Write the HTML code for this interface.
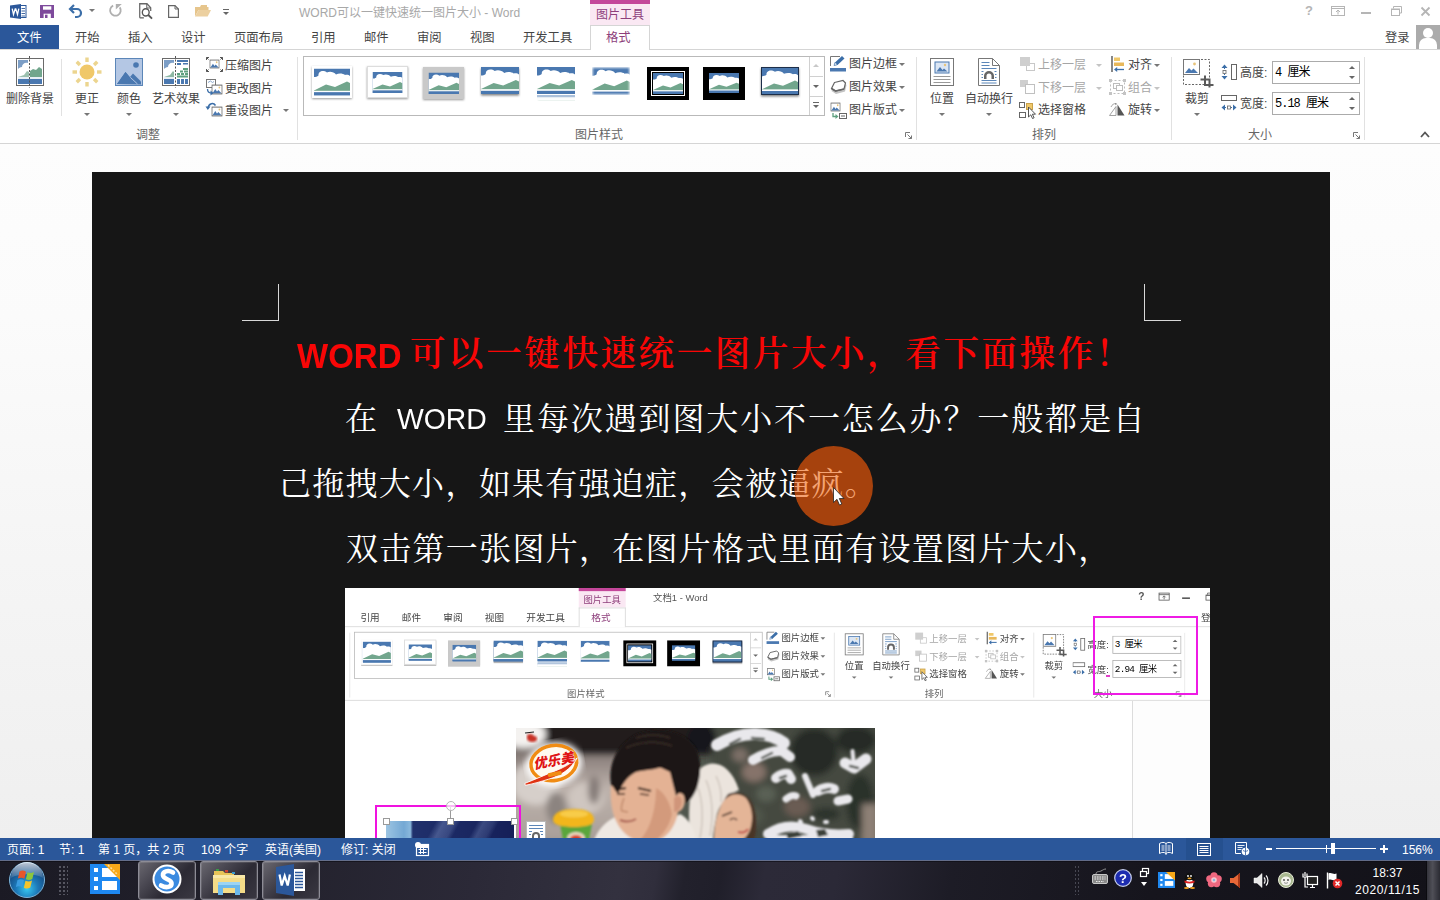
<!DOCTYPE html>
<html lang="zh-CN"><head><meta charset="utf-8"><title>WORD</title>
<style>
html,body{margin:0;padding:0}
body{width:1440px;height:900px;overflow:hidden;position:relative;background:#fff;font-family:"Liberation Sans","Noto Sans CJK SC",sans-serif;font-size:12px;color:#444;line-height:1}
.a{position:absolute}
.t{position:absolute;white-space:nowrap;line-height:16px;height:16px}
.tab{position:absolute;top:30px;font-size:12.300px;line-height:16px;color:#444;white-space:nowrap}
.lbl{position:absolute;font-size:12px;line-height:16px;color:#444;white-space:nowrap}
.dis{color:#a6a6a6}
.grp{position:absolute;top:127px;font-size:12px;line-height:16px;color:#666;white-space:nowrap}
.sep{position:absolute;top:57px;width:1px;height:83px;background:#e1e1e1}
.arr{position:absolute;width:0;height:0;border-left:3px solid transparent;border-right:3px solid transparent;border-top:3px solid #777}
svg{position:absolute;overflow:visible}
.st{position:absolute;top:842px;font-size:12px;line-height:16px;color:#fff;white-space:nowrap}
.tb{position:absolute;top:861px;width:56px;height:37px;border:1px solid #8d8c96;border-radius:3px;background:linear-gradient(135deg,#6a6870 0,#4a4852 30%,#2c2a34 60%,#3a3842 100%);box-shadow:inset 0 0 0 1px rgba(255,255,255,.12)}
.dt{position:absolute;white-space:nowrap;font-family:"Liberation Serif","Noto Serif CJK SC",serif;font-size:33.280px;line-height:50px;height:50px;color:#fff}
</style></head><body>
<svg width="0" height="0" style="position:absolute;left:-10px;top:-10px">
<defs>
<symbol id="pic" viewBox="0 0 36 27" preserveAspectRatio="none">
<rect width="36" height="27" fill="#4a78b0"/>
<path d="M0 8.500C2 8.500 3 8 4.500 7C4 3 9 1 13 4C15 2.500 20 3 22 6C25 4.500 29 5 31 6.500C33 6 35 6.500 36 7.500V23H0z" fill="#fff"/>
<path d="M0 22l12-6 9 2.500 12-5.500 3 1.500v8H0z" fill="#72a68d"/>
<rect y="22.300" width="36" height="1.600" fill="#fff"/>
<rect y="23.900" width="36" height="3.100" fill="#4a78b0"/>
</symbol>
<symbol id="mtn" viewBox="0 0 16 12" preserveAspectRatio="none">
<rect x="0.500" y="0.500" width="15" height="11" fill="#fff" stroke="#5a5a5a" stroke-width="1.500"/>
<path d="M1.500 10.500l4-5 2.500 3 2-2 4.500 4z" fill="#4a78b0"/><circle cx="11.500" cy="3.600" r="1.300" fill="#e8c47a"/>
</symbol>
<filter id="sh" x="-20%" y="-20%" width="140%" height="150%"><feDropShadow dx="0" dy="1" stdDeviation="1" flood-color="#000" flood-opacity="0.400"/></filter>
<filter id="sh2" x="-20%" y="-20%" width="140%" height="150%"><feDropShadow dx="0" dy="1.500" stdDeviation="1" flood-color="#000" flood-opacity="0.500"/></filter>
<filter id="soft" x="-10%" y="-10%" width="120%" height="120%"><feGaussianBlur stdDeviation="1"/></filter>
</defs>
</svg>

<!-- title bar -->
<div class="a" style="left:0;top:0;width:1440px;height:25px;background:#fff"></div>
<!-- word icon -->
<svg style="left:10px;top:4px" width="17" height="15" viewBox="0 0 17 15">
<rect x="8" y="1.5" width="8" height="12" fill="#fff" stroke="#2b579a" stroke-width="1"/>
<path d="M11.500 4.500h3.500M11.500 7h3.500M11.500 9.500h3.500M11.500 12h3.500" stroke="#2b579a" stroke-width="0.900"/>
<path d="M0 1.6L11 0v15L0 13.4z" fill="#2b579a"/>
<path d="M2.2 4.6l1.3 5.8L5.2 5l.6 0 1.7 5.4L8.8 4.6" fill="none" stroke="#fff" stroke-width="1.3"/>
</svg>
<!-- save -->
<svg style="left:40px;top:5px" width="14" height="13" viewBox="0 0 14 13">
<path d="M0 0h14v13H0z" fill="#7e4a9c"/><rect x="3" y="1.300" width="8.300" height="3.400" fill="#fff"/><rect x="3.600" y="8.700" width="7.200" height="4.300" fill="#fff"/><rect x="5" y="9.700" width="2.500" height="3.300" fill="#7e4a9c"/>
</svg>
<!-- undo -->
<svg style="left:69px;top:4px" width="14" height="14" viewBox="0 0 14 14">
<path d="M5 1L1 5l4 4" fill="none" stroke="#3b6ea8" stroke-width="2.2"/><path d="M1.5 5h6.5a4 4 0 0 1 0 8H6" fill="none" stroke="#3b6ea8" stroke-width="2.2"/>
</svg>
<div class="arr" style="left:89px;top:9px;border-top-color:#777"></div>
<!-- redo -->
<svg style="left:109px;top:3px" width="14" height="15" viewBox="0 0 14 15">
<path d="M4.160 2.600A5.300 5.300 0 1 0 10.740 4.360" fill="none" stroke="#b0b0b0" stroke-width="1.800"/><path d="M6.800 1h6l-6 5.500z" fill="#b0b0b0"/>
</svg>
<!-- print preview -->
<svg style="left:139px;top:2.800px" width="14.500" height="16.500" viewBox="0 0 14 15" preserveAspectRatio="none">
<path d="M0.7 13.5V0.7h7l3.6 3.6v3" fill="none" stroke="#666" stroke-width="1.2"/><path d="M7.5 0.7v3.8h3.8" fill="none" stroke="#666" stroke-width="1"/>
<circle cx="6.5" cy="8.5" r="3.3" fill="#fff" stroke="#555" stroke-width="1.3"/><path d="M9 11l3.6 3.2" stroke="#555" stroke-width="1.8"/><path d="M0.7 13.5h4" stroke="#666" stroke-width="1.2"/>
</svg>
<!-- new -->
<svg style="left:168px;top:5px" width="11" height="13" viewBox="0 0 11 13">
<path d="M0.6 0.6h6.4l3.4 3.4v8.4H0.6z" fill="#fff" stroke="#666" stroke-width="1.2"/><path d="M7 0.6v3.4h3.4" fill="none" stroke="#666" stroke-width="1"/>
</svg>
<!-- folder -->
<svg style="left:195px;top:5px" width="16" height="12" viewBox="0 0 16 12">
<path d="M0 11.5V2h5l1-2h6v2h1.5v3H3.5z" fill="#e6c58c"/><path d="M0 11.5l3.5-6.5H16l-3.3 6.5z" fill="#ecd0a0"/>
</svg>
<div class="a" style="left:223px;top:9px;width:6px;height:1px;background:#666"></div>
<div class="arr" style="left:223px;top:12px;border-top-color:#666"></div>
<div class="t" style="left:299px;top:5px;font-size:12px;color:#a8a8a8">WORD可以一键快速统一图片大小 - Word</div>
<!-- picture tools context -->
<div class="a" style="left:590px;top:0;width:60px;height:25px;background:#fae8f3"></div>
<div class="a" style="left:590px;top:0;width:60px;height:4px;background:#c4479a"></div>
<div class="t" style="left:596px;top:6.700px;font-size:12px;color:#8e3f7c">图片工具</div>
<!-- window buttons -->
<div class="t" style="left:1305px;top:3px;font-size:13px;font-weight:bold;color:#b5b5b5">?</div>
<svg style="left:1331px;top:6px" width="14" height="10" viewBox="0 0 14 10"><rect x="0.5" y="0.5" width="13" height="9" fill="none" stroke="#b5b5b5"/><path d="M0.5 2.5h13" stroke="#b5b5b5"/><path d="M7 8.5V4.5M5 6l2-2 2 2" fill="none" stroke="#b5b5b5"/></svg>
<div class="a" style="left:1361px;top:12px;width:10px;height:2px;background:#b5b5b5"></div>
<svg style="left:1391px;top:6px" width="11" height="10" viewBox="0 0 11 10"><path d="M2.5 2.5V0.5h8v6.5h-2" fill="none" stroke="#b5b5b5"/><rect x="0.5" y="3" width="8" height="6.5" fill="none" stroke="#b5b5b5"/><path d="M0.5 3.5h8" stroke="#b5b5b5"/></svg>
<svg style="left:1421px;top:7px" width="9" height="9" viewBox="0 0 9 9"><path d="M0.5 0.5l8 8M8.5 0.5l-8 8" stroke="#b5b5b5" stroke-width="1.8"/></svg>

<!-- tabs -->
<div class="a" style="left:0;top:25px;width:59px;height:24px;background:#2b579a"></div>
<div class="tab" style="left:17px;color:#fff">文件</div>
<div class="tab" style="left:75px">开始</div>
<div class="tab" style="left:128px">插入</div>
<div class="tab" style="left:181px">设计</div>
<div class="tab" style="left:234px">页面布局</div>
<div class="tab" style="left:311px">引用</div>
<div class="tab" style="left:364px">邮件</div>
<div class="tab" style="left:417px">审阅</div>
<div class="tab" style="left:470px">视图</div>
<div class="tab" style="left:523px">开发工具</div>
<div class="a" style="left:0;top:49px;width:1440px;height:1px;background:#d5d5d5"></div>
<div class="a" style="left:590px;top:25px;width:58px;height:24px;background:#fff;border:1px solid #d5d5d5;border-bottom:none"></div>
<div class="tab" style="left:606px;color:#8e3f7c">格式</div>
<div class="tab" style="left:1385px">登录</div>
<div class="a" style="left:1416px;top:25px;width:24px;height:24px;background:#ababab;overflow:hidden">
<div class="a" style="left:7px;top:3px;width:10px;height:10px;border-radius:50%;background:#fff"></div>
<div class="a" style="left:3px;top:13px;width:18px;height:16px;border-radius:7px 7px 0 0;background:#fff"></div>
</div>

<!-- ribbon -->
<div class="a" style="left:0;top:143px;width:1440px;height:1px;background:#d5d5d5"></div>
<!-- group 1: adjust -->
<svg style="left:16px;top:56px" width="28" height="32" viewBox="0 0 28 32">
<rect x="0.500" y="2.500" width="27" height="27" fill="#fff" stroke="#6a6a6a"/>
<path d="M2 4h10v3c-3-1-6 1-6 4c-2 0-3 1-4 2z" fill="#5b86b8" opacity="0.800"/>
<path d="M2 21l6-2 3-4 2 1v5z" fill="#72a68d" opacity="0.700"/>
<path d="M14 21v-6l3-2 3 1 3-3 3 2v8z" fill="#72a68d"/>
<rect x="2" y="21.300" width="24" height="1.400" fill="#dfe9f3"/>
<rect x="2" y="23" width="24" height="5" fill="#4a78b0"/>
<path d="M13.500 0v32" stroke="#555" stroke-width="1" stroke-dasharray="2 1.500"/>
</svg>
<div class="lbl" style="left:6px;top:91px">删除背景</div>
<div class="a" style="left:61px;top:59px;width:1px;height:57px;background:#e1e1e1"></div>
<!-- sun -->
<svg style="left:72px;top:57px" width="30" height="30" viewBox="0 0 30 30">
<g fill="#ecd58f"><rect x="13.300" y="0.500" width="3.400" height="4.500"/><rect x="13.300" y="25" width="3.400" height="4.500"/><rect x="0.500" y="13.300" width="4.500" height="3.400"/><rect x="25" y="13.300" width="4.500" height="3.400"/>
<g transform="rotate(45 15 15)"><rect x="13.300" y="0.500" width="3.400" height="4.500"/><rect x="13.300" y="25" width="3.400" height="4.500"/><rect x="0.500" y="13.300" width="4.500" height="3.400"/><rect x="25" y="13.300" width="4.500" height="3.400"/></g></g>
<circle cx="15" cy="15" r="7.500" fill="#f0c869"/>
</svg>
<div class="lbl" style="left:75px;top:91px">更正</div>
<div class="arr" style="left:84px;top:113px"></div>
<!-- color -->
<svg style="left:115px;top:58px" width="28" height="28" viewBox="0 0 28 28">
<rect x="0.500" y="0.500" width="27" height="27" fill="#b4c7e4" stroke="#5b86b8"/>
<path d="M2 26l8.500-12 7 8.500-1.500 1.500 2-5 8.500 7.500z" fill="#4a78b0"/><path d="M2 26l8.500-12 10 12z" fill="#4a78b0"/><path d="M15 19l3-3.500 8 8v2.500h-4z" fill="#4a78b0"/>
<path d="M15.500 19.500l7 6.500" stroke="#b4c7e4" stroke-width="1"/>
<circle cx="21" cy="7" r="2.800" fill="#4a78b0"/>
</svg>
<div class="lbl" style="left:117px;top:91px">颜色</div>
<div class="arr" style="left:126px;top:113px"></div>
<!-- artistic -->
<svg style="left:162px;top:56px" width="28" height="32" viewBox="0 0 28 32">
<rect x="0.500" y="2.500" width="27" height="27" fill="#fff" stroke="#6a6a6a"/>
<path d="M2 4h10v3c-3-1-6 1-6 4c-2 0-3 1-4 2z" fill="#5b86b8" opacity="0.800"/>
<path d="M2 21l6-2 3-4 1 1v5z" fill="#72a68d" opacity="0.800"/>
<rect x="2" y="21.300" width="10" height="1.400" fill="#dfe9f3"/>
<rect x="2" y="23" width="10" height="5" fill="#4a78b0"/>
<g fill="#4a78b0"><rect x="15" y="4" width="11" height="2"/><rect x="15" y="7" width="4" height="2"/><rect x="21" y="7" width="5" height="1.500"/><rect x="15" y="23" width="3" height="5"/><rect x="19" y="23" width="3" height="5"/><rect x="23" y="23" width="3" height="5"/></g>
<g fill="#5fa07f"><rect x="21" y="12" width="5" height="2"/><rect x="18" y="14.500" width="3" height="2"/><rect x="22" y="14.500" width="4" height="2"/><rect x="15" y="17" width="3" height="2"/><rect x="19" y="17" width="3" height="2"/><rect x="23" y="17" width="3" height="2"/><rect x="15" y="19.500" width="11" height="2"/></g>
<path d="M13.500 0v32" stroke="#555" stroke-width="1" stroke-dasharray="2 1.500"/>
</svg>
<div class="lbl" style="left:152px;top:91px">艺术效果</div>
<div class="arr" style="left:173px;top:113px"></div>
<!-- small buttons -->
<svg style="left:206px;top:57px" width="17" height="15" viewBox="0 0 17 15">
<use href="#mtn" x="3.500" y="2.500" width="10" height="9"/>
<path d="M0.500 3V0.500H3M14 0.500h2.500V3M16.500 12v2.500H14M3 14.500H0.500V12" fill="none" stroke="#555" stroke-width="1"/>
<path d="M0.500 0.500l2 2M16.500 0.500l-2 2M16.500 14.500l-2-2M0.500 14.500l2-2" stroke="#555" stroke-width="1"/>
</svg>
<div class="lbl" style="left:225px;top:58px">压缩图片</div>
<svg style="left:206px;top:79px" width="17" height="16" viewBox="0 0 17 16">
<rect x="0.500" y="0.500" width="9" height="8" fill="#fff" stroke="#777"/>
<use href="#mtn" x="5.500" y="5.500" width="11" height="10"/>
<path d="M2 3.500l2.500-1.500 2 1.500 1.500-1" fill="none" stroke="#8aa8cc" stroke-width="1"/><path d="M1.500 10c0 3 1 4 4 4" fill="none" stroke="#3b6ea8" stroke-width="1.300"/><path d="M4.500 11.500l3 2.500-3 2.500z" fill="#3b6ea8"/>
</svg>
<div class="lbl" style="left:225px;top:81px">更改图片</div>
<svg style="left:206px;top:102px" width="17" height="16" viewBox="0 0 17 16">
<use href="#mtn" x="5.500" y="4.500" width="11" height="10"/>
<path d="M9.500 3.500C7.500 0.500 3 1 2 6" fill="none" stroke="#3b6ea8" stroke-width="1.500"/><path d="M-0.500 4.500h5l-2.700 3.500z" fill="#3b6ea8"/>
</svg>
<div class="lbl" style="left:225px;top:103px">重设图片</div>
<div class="arr" style="left:283px;top:109px"></div>
<div class="grp" style="left:136px">调整</div>
<div class="sep" style="left:297px"></div>
<!-- gallery -->
<div class="a" style="left:303px;top:56px;width:520px;height:58px;border:1px solid #b9b9b9;background:#fff"></div>
<div class="a" style="left:809px;top:57px;width:1px;height:58px;background:#d0d0d0"></div>
<div class="a" style="left:809px;top:76px;width:14px;height:1px;background:#d0d0d0"></div>
<div class="a" style="left:809px;top:96px;width:14px;height:1px;background:#d0d0d0"></div>
<div class="arr" style="left:813px;top:64px;border-top:none;border-bottom:3px solid #c8c8c8"></div>
<div class="arr" style="left:813px;top:85px;border-top-color:#666"></div>
<div class="a" style="left:813px;top:102px;width:6px;height:1px;background:#666"></div>
<div class="arr" style="left:813px;top:105px;border-top-color:#666"></div>
<!-- thumbs -->
<svg style="left:312px;top:66px" width="40" height="32"><rect width="40" height="32" fill="#fff" filter="url(#sh)"/><use href="#pic" x="2" y="2.500" width="36" height="27"/></svg>
<svg style="left:367px;top:66px" width="41" height="32"><rect x="0.500" y="0.500" width="40" height="31" fill="#fff" stroke="#ddd" filter="url(#sh)"/><use href="#pic" x="5.500" y="6" width="30" height="21"/></svg>
<svg style="left:423px;top:67px" width="41" height="32"><rect width="41" height="32" fill="#c9c9c9" filter="url(#sh)"/><use href="#pic" x="5.500" y="5.500" width="30.500" height="21.500"/></svg>
<svg style="left:481px;top:67px" width="38" height="29"><use href="#pic" width="38" height="27" filter="url(#sh2)"/></svg>
<svg style="left:537px;top:67px;overflow:hidden" width="38" height="34"><use href="#pic" width="38" height="27"/><use href="#pic" width="38" height="27" transform="matrix(1 0 0 -1 0 55)" opacity="0.450"/><rect y="30" width="38" height="8" fill="#fff" opacity="0.700"/></svg>
<svg style="left:592px;top:67px;overflow:hidden" width="38" height="29"><use href="#pic" x="0" y="0" width="38" height="28"/><rect x="-1" y="-1" width="40" height="30" fill="none" stroke="#fff" stroke-width="3.500" filter="url(#soft)"/></svg>
<svg style="left:647px;top:67px" width="42" height="33"><rect width="42" height="33" fill="#000"/><use href="#pic" x="6" y="6" width="30" height="21"/><rect x="4.500" y="4.500" width="33" height="24" fill="none" stroke="#fff" stroke-width="1"/></svg>
<svg style="left:703px;top:67px" width="42" height="33"><rect width="42" height="33" fill="#000"/><use href="#pic" x="6" y="6" width="30" height="20"/></svg>
<svg style="left:761px;top:67px" width="38" height="29"><rect width="38" height="28" fill="#1f2f4a" filter="url(#sh2)"/><use href="#pic" x="1" y="1" width="36" height="26"/></svg>
<!-- pic border/effects/layout -->
<svg style="left:830px;top:56px" width="17" height="17" viewBox="0 0 17 17">
<path d="M0.500 10V0.500H10" fill="none" stroke="#777"/><path d="M4 9.500l1-3 7-6.500 2.500 2.500-7 6.500z" fill="#3b6ea8"/><path d="M4 9.500l1-3 2.500 2z" fill="#fff" stroke="#3b6ea8" stroke-width="0.600"/>
<rect x="0" y="12" width="16" height="3.500" fill="#4a78b0"/>
</svg>
<div class="lbl" style="left:849px;top:56px">图片边框</div><div class="arr" style="left:899px;top:63px"></div>
<svg style="left:830px;top:80px" width="17" height="15" viewBox="0 0 17 15">
<path d="M4 3l9-2.500 3 3-1.500 6.500-9 2.500-4.500-3z" fill="#888" opacity="0.500" transform="translate(0.500 1.500)"/>
<path d="M4.500 2.500l8.500-2 2.500 2.500-1.500 6-8.500 2-4-2.500z" fill="#fff" stroke="#666" stroke-width="1.200"/><path d="M1.500 8.500l4 2.500 8.500-2" fill="none" stroke="#666" stroke-width="1.500"/>
</svg>
<div class="lbl" style="left:849px;top:79px">图片效果</div><div class="arr" style="left:899px;top:86px"></div>
<svg style="left:830px;top:102px" width="17" height="17" viewBox="0 0 17 17">
<use href="#mtn" x="0.500" y="0.500" width="10" height="9"/>
<path d="M3 11v3.500h3.500" fill="none" stroke="#5fa07f" stroke-width="1.300"/><path d="M5.500 12l3 2.500-3 2.500z" fill="#5fa07f"/>
<rect x="9.500" y="11.500" width="7" height="5" fill="#fff" stroke="#666"/><path d="M11 14h4" stroke="#666"/>
</svg>
<div class="lbl" style="left:849px;top:102px">图片版式</div><div class="arr" style="left:899px;top:109px"></div>
<div class="grp" style="left:575px">图片样式</div>
<svg style="left:905px;top:132px" width="7" height="7" viewBox="0 0 7 7"><path d="M0.500 5V0.500H5" fill="none" stroke="#777"/><path d="M2.500 2.500l4 4M6.500 3.500v3h-3" fill="none" stroke="#777"/></svg>
<div class="sep" style="left:916px"></div>
<!-- arrange group -->
<svg style="left:930px;top:58px" width="24" height="28" viewBox="0 0 24 28">
<rect x="0.500" y="0.500" width="23" height="27" fill="#fff" stroke="#777"/>
<rect x="5" y="4" width="14" height="11" fill="#dbe6f4" stroke="#4a78b0"/>
<path d="M6.500 13.500l3.500-4.500 2.500 3 1.500-1.500 3.500 3z" fill="#4a78b0"/><circle cx="15" cy="7" r="1.200" fill="#e8c47a"/>
<path d="M3.500 18.500h17M3.500 21.500h17M3.500 24.500h17" stroke="#999"/>
</svg>
<div class="lbl" style="left:930px;top:91px">位置</div>
<div class="arr" style="left:939px;top:113px"></div>
<svg style="left:978px;top:58px" width="22" height="28" viewBox="0 0 22 28">
<path d="M0.500 0.500h14l7 7v20H0.500z" fill="#fff" stroke="#777"/><path d="M14.500 0.500v7h7" fill="none" stroke="#777"/>
<path d="M3.500 4.500h8M3.500 7.500h8M3.500 10.500h15M3.500 22.500h15M3.500 25h15M3.500 13.500h2M16.500 13.500h2M3.500 16.500h1.500M17 16.500h1.500M3.500 19.500h1.500M17 19.500h1.500" stroke="#5b86b8"/>
<path d="M6 21v-3a5 5 0 0 1 10 0v3h-2.500v-3a2.500 2.500 0 0 0-5 0v3z" fill="#666"/>
</svg>
<div class="lbl" style="left:965px;top:91px">自动换行</div>
<div class="arr" style="left:986px;top:113px"></div>
<!-- bring forward / send backward / selection pane -->
<svg style="left:1020px;top:57px" width="16" height="15" viewBox="0 0 16 15"><rect x="6.500" y="6.500" width="8" height="7" fill="#fff" stroke="#c8c8c8"/><rect x="0" y="0" width="10" height="9" fill="#cfcfcf"/></svg>
<div class="lbl dis" style="left:1038px;top:57px">上移一层</div><div class="arr" style="left:1096px;top:64px;border-top-color:#c4c4c4"></div>
<svg style="left:1020px;top:80px" width="16" height="15" viewBox="0 0 16 15"><rect x="0" y="0" width="8" height="7" fill="#cfcfcf"/><rect x="5.500" y="4.500" width="9" height="9" fill="#fff" stroke="#c0c0c0"/></svg>
<div class="lbl dis" style="left:1038px;top:80px">下移一层</div><div class="arr" style="left:1096px;top:87px;border-top-color:#c4c4c4"></div>
<svg style="left:1019px;top:102px" width="18" height="17" viewBox="0 0 18 17">
<rect x="0.500" y="0.500" width="5" height="5" fill="#fff" stroke="#666"/><rect x="0.500" y="10.500" width="6" height="5" fill="#fff" stroke="#666"/>
<rect x="7.500" y="1.500" width="6" height="6" fill="#f0c869" stroke="#c9a14a"/>
<path d="M9.500 5v10l2.300-2.200 1.700 3.700 1.600-0.700-1.700-3.600h3.100z" fill="#fff" stroke="#444" stroke-width="0.900"/>
</svg>
<div class="lbl" style="left:1038px;top:102px">选择窗格</div>
<!-- align / group / rotate -->
<svg style="left:1111px;top:56px" width="14" height="16" viewBox="0 0 14 16">
<path d="M1 0v16" stroke="#555" stroke-width="1.400"/><rect x="3" y="1.500" width="6" height="3.500" fill="#f0c869"/><rect x="3" y="6.500" width="10" height="3.500" fill="#e8b85a"/>
<path d="M13 13.500H4.500" stroke="#3b6ea8" stroke-width="1.300"/><path d="M3 13.500l3.200-2.600v5.200z" fill="#3b6ea8"/>
</svg>
<div class="lbl" style="left:1128px;top:57px">对齐</div><div class="arr" style="left:1154px;top:64px"></div>
<svg style="left:1109px;top:79px" width="17" height="16" viewBox="0 0 17 16">
<path d="M1.500 1.500h14v13h-14z" fill="none" stroke="#bdbdbd" stroke-dasharray="2 2"/>
<g fill="#c4c4c4"><rect x="0" y="0" width="3" height="3"/><rect x="14" y="0" width="3" height="3"/><rect x="0" y="13" width="3" height="3"/><rect x="14" y="13" width="3" height="3"/></g>
<rect x="4.500" y="4.500" width="6" height="5" fill="#fff" stroke="#bdbdbd"/><rect x="7.500" y="6.500" width="6" height="5" fill="#fff" stroke="#bdbdbd"/>
</svg>
<div class="lbl dis" style="left:1128px;top:80px">组合</div><div class="arr" style="left:1154px;top:87px;border-top-color:#c4c4c4"></div>
<svg style="left:1109px;top:103px" width="17" height="14" viewBox="0 0 17 14">
<path d="M8.500 1.500v11h7z" fill="#555"/><path d="M7 3.500v9h-6.500z" fill="none" stroke="#999" stroke-width="0.900"/><path d="M2 4c1-2.500 3-3.500 5-3.500" fill="none" stroke="#999" stroke-width="0.900"/><path d="M6 0l2.200 0.700-1.700 1.500z" fill="#888"/>
</svg>
<div class="lbl" style="left:1128px;top:102px">旋转</div><div class="arr" style="left:1154px;top:109px"></div>
<div class="grp" style="left:1032px">排列</div>
<div class="sep" style="left:1171px"></div>
<!-- size group -->
<svg style="left:1183px;top:59px" width="30" height="28" viewBox="0 0 30 28">
<path d="M0.500 16.500v9h26v-25h-10" fill="none" stroke="#666" stroke-dasharray="2 1.500"/>
<rect x="0.500" y="0.500" width="16" height="15" fill="#fff" stroke="#777"/>
<path d="M2 14l4-5 2.500 2.500 2-2 4.500 4.500z" fill="#4a78b0"/><circle cx="11.500" cy="5" r="1.400" fill="#e8c47a"/>
<path d="M22 16.500v9.500h8.500M17.500 20.500h9v8" fill="none" stroke="#5a5a5a" stroke-width="2"/>
</svg>
<div class="lbl" style="left:1185px;top:91px">裁剪</div>
<div class="arr" style="left:1194px;top:113px"></div>
<svg style="left:1221px;top:64px" width="16" height="16" viewBox="0 0 16 16">
<rect x="10.500" y="0.500" width="5" height="15" fill="#fff" stroke="#666"/>
<path d="M3.500 3.500v9" stroke="#3b6ea8" stroke-dasharray="1.500 1.500"/><path d="M0.500 4l3-3.500 3 3.500zM0.500 12l3 3.500 3-3.500z" fill="#3b6ea8"/><rect x="2" y="6.500" width="3" height="3" fill="#fff" stroke="#666" stroke-width="0.800"/>
</svg>
<div class="lbl" style="left:1240px;top:65px">高度:</div>
<div class="a" style="left:1272px;top:61px;width:86px;height:21px;border:1px solid #ababab;background:#fff"></div>
<div class="t" style="left:1275px;top:65px;font-family:'Liberation Mono','Noto Sans CJK SC',monospace;font-size:12px;color:#000;letter-spacing:-1px">4 厘米</div>
<div class="arr" style="left:1349px;top:66px;border-top:none;border-bottom:3px solid #666"></div>
<div class="arr" style="left:1349px;top:76px;border-top-color:#666"></div>
<svg style="left:1221px;top:95px" width="16" height="17" viewBox="0 0 16 17">
<rect x="0.500" y="0.500" width="15" height="5" fill="#fff" stroke="#666"/>
<path d="M3.500 12.500h9" stroke="#3b6ea8" stroke-dasharray="1.500 1.500"/><path d="M4 9.500l-3.500 3 3.500 3zM12 9.500l3.500 3-3.500 3z" fill="#3b6ea8"/><rect x="6.500" y="11" width="3" height="3" fill="#fff" stroke="#666" stroke-width="0.800"/>
</svg>
<div class="lbl" style="left:1240px;top:96px">宽度:</div>
<div class="a" style="left:1272px;top:92px;width:86px;height:21px;border:1px solid #ababab;background:#fff"></div>
<div class="t" style="left:1275px;top:96px;font-family:'Liberation Mono','Noto Sans CJK SC',monospace;font-size:12px;color:#000;letter-spacing:-1px">5.18 厘米</div>
<div class="arr" style="left:1349px;top:97px;border-top:none;border-bottom:3px solid #666"></div>
<div class="arr" style="left:1349px;top:107px;border-top-color:#666"></div>
<div class="grp" style="left:1248px">大小</div>
<svg style="left:1353px;top:132px" width="7" height="7" viewBox="0 0 7 7"><path d="M0.500 5V0.500H5" fill="none" stroke="#777"/><path d="M2.500 2.500l4 4M6.500 3.500v3h-3" fill="none" stroke="#777"/></svg>
<div class="sep" style="left:1364px"></div>
<svg style="left:1420px;top:131px" width="10" height="7" viewBox="0 0 10 7"><path d="M1 6l4-4.500 4 4.500" fill="none" stroke="#555" stroke-width="1.800"/></svg>

<!-- document area -->
<div class="a" style="left:0;top:144px;width:1440px;height:694px;background:linear-gradient(180deg,#fdfdfd 0,#fbfbfb 25%,#f5f5f5 60%,#efefef 100%)"></div>
<div class="a" id="page" style="left:92px;top:172px;width:1238px;height:666px;background:#161616;overflow:hidden">
<div class="a" style="left:186px;top:112px;width:1px;height:37px;background:#d8d8d8"></div>
<div class="a" style="left:150px;top:148px;width:37px;height:1px;background:#d8d8d8"></div>
<div class="a" style="left:1052px;top:112px;width:1px;height:37px;background:#d8d8d8"></div>
<div class="a" style="left:1052px;top:148px;width:37px;height:1px;background:#d8d8d8"></div>
<!-- title -->
<div class="dt" style="left:205px;top:159px;color:#f80606;font-weight:700;font-family:'Liberation Sans',sans-serif;font-size:35.700px;transform:scaleX(0.925);transform-origin:0 50%">WORD</div>
<div class="dt" style="left:318px;top:157px;color:#f80606;font-weight:600;font-size:35.500px;letter-spacing:2.600px">可以一键快速统一图片大小，看下面操作！</div>
<!-- body -->
<div class="dt" style="left:253px;top:222px;font-size:32px">在</div>
<div class="dt" style="left:305px;top:222px;font-family:'Liberation Sans',sans-serif;font-size:30px;transform:scaleX(0.945);transform-origin:0 50%">WORD</div>
<div class="dt" style="left:411px;top:222px;font-size:32px;letter-spacing:1.880px">里每次遇到图大小不一怎么办？一般都是自</div>
<div class="dt" style="left:187px;top:287px;font-size:32px;letter-spacing:1.280px">己拖拽大小，如果有强迫症，会被逼疯。</div>
<div class="a" style="left:702px;top:274px;width:79px;height:80px;border-radius:50%;background:#a6420d"></div>
<div class="dt" style="left:187px;top:287px;font-size:32px;letter-spacing:1.280px;color:#f4a373;clip-path:circle(39px at 554.500px 27px)">己拖拽大小，如果有强迫症，会被逼疯。</div>
<div class="dt" style="left:254px;top:352px;font-size:32px;letter-spacing:1.280px">双击第一张图片，在图片格式里面有设置图片大小，</div>
<!-- cursor -->
<svg style="left:741px;top:315px" width="13" height="19" viewBox="0 0 13 19"><path d="M0.500 0.500v15l3.500-3.200 2.500 5.700 2.300-1-2.500-5.500h4.700z" fill="#fff" stroke="#222" stroke-width="0.800"/></svg>
<div class="a" id="embed" style="left:253px;top:416px;width:865px;height:250px;background:#fff;overflow:hidden">
<div class="a" style="left:-228.44px;top:0;width:1440px;height:400px;transform:scale(0.7826);transform-origin:0 0">
<!-- picture tools context -->
<div class="a" style="left:590px;top:0;width:60px;height:25px;background:#fae8f3"></div>
<div class="a" style="left:590px;top:0;width:60px;height:4px;background:#c4479a"></div>
<div class="t" style="left:596px;top:6.700px;font-size:12px;color:#8e3f7c">图片工具</div>
<!-- window buttons -->
<div class="t" style="left:1305px;top:3px;font-size:13px;font-weight:bold;color:#555">?</div>
<svg style="left:1331px;top:6px" width="14" height="10" viewBox="0 0 14 10"><rect x="0.5" y="0.5" width="13" height="9" fill="none" stroke="#555"/><path d="M0.5 2.5h13" stroke="#555"/><path d="M7 8.5V4.5M5 6l2-2 2 2" fill="none" stroke="#555"/></svg>
<div class="a" style="left:1361px;top:12px;width:10px;height:2px;background:#555"></div>
<svg style="left:1391px;top:6px" width="11" height="10" viewBox="0 0 11 10"><path d="M2.5 2.5V0.5h8v6.5h-2" fill="none" stroke="#555"/><rect x="0.5" y="3" width="8" height="6.5" fill="none" stroke="#555"/><path d="M0.5 3.5h8" stroke="#555"/></svg>
<svg style="left:1421px;top:7px" width="9" height="9" viewBox="0 0 9 9"><path d="M0.5 0.5l8 8M8.5 0.5l-8 8" stroke="#555" stroke-width="1.8"/></svg>

<div class="t" style="left:685px;top:5px;font-size:12px;color:#555">文档1 - Word</div>
<!-- tabs -->
<div class="a" style="left:0;top:25px;width:59px;height:24px;background:#2b579a"></div>
<div class="tab" style="left:17px;color:#fff">文件</div>
<div class="tab" style="left:75px">开始</div>
<div class="tab" style="left:128px">插入</div>
<div class="tab" style="left:181px">设计</div>
<div class="tab" style="left:234px">页面布局</div>
<div class="tab" style="left:311px">引用</div>
<div class="tab" style="left:364px">邮件</div>
<div class="tab" style="left:417px">审阅</div>
<div class="tab" style="left:470px">视图</div>
<div class="tab" style="left:523px">开发工具</div>
<div class="a" style="left:0;top:49px;width:1440px;height:1px;background:#d5d5d5"></div>
<div class="a" style="left:590px;top:25px;width:58px;height:24px;background:#fff;border:1px solid #d5d5d5;border-bottom:none"></div>
<div class="tab" style="left:606px;color:#8e3f7c">格式</div>
<div class="tab" style="left:1385px">登录</div>
<div class="a" style="left:1416px;top:25px;width:24px;height:24px;background:#ababab;overflow:hidden">
<div class="a" style="left:7px;top:3px;width:10px;height:10px;border-radius:50%;background:#fff"></div>
<div class="a" style="left:3px;top:13px;width:18px;height:16px;border-radius:7px 7px 0 0;background:#fff"></div>
</div>

<!-- ribbon -->
<div class="a" style="left:0;top:143px;width:1440px;height:1px;background:#d5d5d5"></div>
<!-- group 1: adjust -->
<svg style="left:16px;top:56px" width="28" height="32" viewBox="0 0 28 32">
<rect x="0.500" y="2.500" width="27" height="27" fill="#fff" stroke="#6a6a6a"/>
<path d="M2 4h10v3c-3-1-6 1-6 4c-2 0-3 1-4 2z" fill="#5b86b8" opacity="0.800"/>
<path d="M2 21l6-2 3-4 2 1v5z" fill="#72a68d" opacity="0.700"/>
<path d="M14 21v-6l3-2 3 1 3-3 3 2v8z" fill="#72a68d"/>
<rect x="2" y="21.300" width="24" height="1.400" fill="#dfe9f3"/>
<rect x="2" y="23" width="24" height="5" fill="#4a78b0"/>
<path d="M13.500 0v32" stroke="#555" stroke-width="1" stroke-dasharray="2 1.500"/>
</svg>
<div class="lbl" style="left:6px;top:91px">删除背景</div>
<div class="a" style="left:61px;top:59px;width:1px;height:57px;background:#e1e1e1"></div>
<!-- sun -->
<svg style="left:72px;top:57px" width="30" height="30" viewBox="0 0 30 30">
<g fill="#ecd58f"><rect x="13.300" y="0.500" width="3.400" height="4.500"/><rect x="13.300" y="25" width="3.400" height="4.500"/><rect x="0.500" y="13.300" width="4.500" height="3.400"/><rect x="25" y="13.300" width="4.500" height="3.400"/>
<g transform="rotate(45 15 15)"><rect x="13.300" y="0.500" width="3.400" height="4.500"/><rect x="13.300" y="25" width="3.400" height="4.500"/><rect x="0.500" y="13.300" width="4.500" height="3.400"/><rect x="25" y="13.300" width="4.500" height="3.400"/></g></g>
<circle cx="15" cy="15" r="7.500" fill="#f0c869"/>
</svg>
<div class="lbl" style="left:75px;top:91px">更正</div>
<div class="arr" style="left:84px;top:113px"></div>
<!-- color -->
<svg style="left:115px;top:58px" width="28" height="28" viewBox="0 0 28 28">
<rect x="0.500" y="0.500" width="27" height="27" fill="#b4c7e4" stroke="#5b86b8"/>
<path d="M2 26l8.500-12 7 8.500-1.500 1.500 2-5 8.500 7.500z" fill="#4a78b0"/><path d="M2 26l8.500-12 10 12z" fill="#4a78b0"/><path d="M15 19l3-3.500 8 8v2.500h-4z" fill="#4a78b0"/>
<path d="M15.500 19.500l7 6.500" stroke="#b4c7e4" stroke-width="1"/>
<circle cx="21" cy="7" r="2.800" fill="#4a78b0"/>
</svg>
<div class="lbl" style="left:117px;top:91px">颜色</div>
<div class="arr" style="left:126px;top:113px"></div>
<!-- artistic -->
<svg style="left:162px;top:56px" width="28" height="32" viewBox="0 0 28 32">
<rect x="0.500" y="2.500" width="27" height="27" fill="#fff" stroke="#6a6a6a"/>
<path d="M2 4h10v3c-3-1-6 1-6 4c-2 0-3 1-4 2z" fill="#5b86b8" opacity="0.800"/>
<path d="M2 21l6-2 3-4 1 1v5z" fill="#72a68d" opacity="0.800"/>
<rect x="2" y="21.300" width="10" height="1.400" fill="#dfe9f3"/>
<rect x="2" y="23" width="10" height="5" fill="#4a78b0"/>
<g fill="#4a78b0"><rect x="15" y="4" width="11" height="2"/><rect x="15" y="7" width="4" height="2"/><rect x="21" y="7" width="5" height="1.500"/><rect x="15" y="23" width="3" height="5"/><rect x="19" y="23" width="3" height="5"/><rect x="23" y="23" width="3" height="5"/></g>
<g fill="#5fa07f"><rect x="21" y="12" width="5" height="2"/><rect x="18" y="14.500" width="3" height="2"/><rect x="22" y="14.500" width="4" height="2"/><rect x="15" y="17" width="3" height="2"/><rect x="19" y="17" width="3" height="2"/><rect x="23" y="17" width="3" height="2"/><rect x="15" y="19.500" width="11" height="2"/></g>
<path d="M13.500 0v32" stroke="#555" stroke-width="1" stroke-dasharray="2 1.500"/>
</svg>
<div class="lbl" style="left:152px;top:91px">艺术效果</div>
<div class="arr" style="left:173px;top:113px"></div>
<!-- small buttons -->
<svg style="left:206px;top:57px" width="17" height="15" viewBox="0 0 17 15">
<use href="#mtn" x="3.500" y="2.500" width="10" height="9"/>
<path d="M0.500 3V0.500H3M14 0.500h2.500V3M16.500 12v2.500H14M3 14.500H0.500V12" fill="none" stroke="#555" stroke-width="1"/>
<path d="M0.500 0.500l2 2M16.500 0.500l-2 2M16.500 14.500l-2-2M0.500 14.500l2-2" stroke="#555" stroke-width="1"/>
</svg>
<div class="lbl" style="left:225px;top:58px">压缩图片</div>
<svg style="left:206px;top:79px" width="17" height="16" viewBox="0 0 17 16">
<rect x="0.500" y="0.500" width="9" height="8" fill="#fff" stroke="#777"/>
<use href="#mtn" x="5.500" y="5.500" width="11" height="10"/>
<path d="M2 3.500l2.500-1.500 2 1.500 1.500-1" fill="none" stroke="#8aa8cc" stroke-width="1"/><path d="M1.500 10c0 3 1 4 4 4" fill="none" stroke="#3b6ea8" stroke-width="1.300"/><path d="M4.500 11.500l3 2.500-3 2.500z" fill="#3b6ea8"/>
</svg>
<div class="lbl" style="left:225px;top:81px">更改图片</div>
<svg style="left:206px;top:102px" width="17" height="16" viewBox="0 0 17 16">
<use href="#mtn" x="5.500" y="4.500" width="11" height="10"/>
<path d="M9.500 3.500C7.500 0.500 3 1 2 6" fill="none" stroke="#3b6ea8" stroke-width="1.500"/><path d="M-0.500 4.500h5l-2.700 3.500z" fill="#3b6ea8"/>
</svg>
<div class="lbl" style="left:225px;top:103px">重设图片</div>
<div class="arr" style="left:283px;top:109px"></div>
<div class="grp" style="left:136px">调整</div>
<div class="sep" style="left:297px"></div>
<!-- gallery -->
<div class="a" style="left:303px;top:56px;width:520px;height:58px;border:1px solid #b9b9b9;background:#fff"></div>
<div class="a" style="left:809px;top:57px;width:1px;height:58px;background:#d0d0d0"></div>
<div class="a" style="left:809px;top:76px;width:14px;height:1px;background:#d0d0d0"></div>
<div class="a" style="left:809px;top:96px;width:14px;height:1px;background:#d0d0d0"></div>
<div class="arr" style="left:813px;top:64px;border-top:none;border-bottom:3px solid #c8c8c8"></div>
<div class="arr" style="left:813px;top:85px;border-top-color:#666"></div>
<div class="a" style="left:813px;top:102px;width:6px;height:1px;background:#666"></div>
<div class="arr" style="left:813px;top:105px;border-top-color:#666"></div>
<!-- thumbs -->
<svg style="left:312px;top:66px" width="40" height="32"><rect width="40" height="32" fill="#fff" filter="url(#sh)"/><use href="#pic" x="2" y="2.500" width="36" height="27"/></svg>
<svg style="left:367px;top:66px" width="41" height="32"><rect x="0.500" y="0.500" width="40" height="31" fill="#fff" stroke="#ddd" filter="url(#sh)"/><use href="#pic" x="5.500" y="6" width="30" height="21"/></svg>
<svg style="left:423px;top:67px" width="41" height="32"><rect width="41" height="32" fill="#c9c9c9" filter="url(#sh)"/><use href="#pic" x="5.500" y="5.500" width="30.500" height="21.500"/></svg>
<svg style="left:481px;top:67px" width="38" height="29"><use href="#pic" width="38" height="27" filter="url(#sh2)"/></svg>
<svg style="left:537px;top:67px;overflow:hidden" width="38" height="34"><use href="#pic" width="38" height="27"/><use href="#pic" width="38" height="27" transform="matrix(1 0 0 -1 0 55)" opacity="0.450"/><rect y="30" width="38" height="8" fill="#fff" opacity="0.700"/></svg>
<svg style="left:592px;top:67px;overflow:hidden" width="38" height="29"><use href="#pic" x="0" y="0" width="38" height="28"/><rect x="-1" y="-1" width="40" height="30" fill="none" stroke="#fff" stroke-width="3.500" filter="url(#soft)"/></svg>
<svg style="left:647px;top:67px" width="42" height="33"><rect width="42" height="33" fill="#000"/><use href="#pic" x="6" y="6" width="30" height="21"/><rect x="4.500" y="4.500" width="33" height="24" fill="none" stroke="#fff" stroke-width="1"/></svg>
<svg style="left:703px;top:67px" width="42" height="33"><rect width="42" height="33" fill="#000"/><use href="#pic" x="6" y="6" width="30" height="20"/></svg>
<svg style="left:761px;top:67px" width="38" height="29"><rect width="38" height="28" fill="#1f2f4a" filter="url(#sh2)"/><use href="#pic" x="1" y="1" width="36" height="26"/></svg>
<!-- pic border/effects/layout -->
<svg style="left:830px;top:56px" width="17" height="17" viewBox="0 0 17 17">
<path d="M0.500 10V0.500H10" fill="none" stroke="#777"/><path d="M4 9.500l1-3 7-6.500 2.500 2.500-7 6.500z" fill="#3b6ea8"/><path d="M4 9.500l1-3 2.500 2z" fill="#fff" stroke="#3b6ea8" stroke-width="0.600"/>
<rect x="0" y="12" width="16" height="3.500" fill="#4a78b0"/>
</svg>
<div class="lbl" style="left:849px;top:56px">图片边框</div><div class="arr" style="left:899px;top:63px"></div>
<svg style="left:830px;top:80px" width="17" height="15" viewBox="0 0 17 15">
<path d="M4 3l9-2.500 3 3-1.500 6.500-9 2.500-4.500-3z" fill="#888" opacity="0.500" transform="translate(0.500 1.500)"/>
<path d="M4.500 2.500l8.500-2 2.500 2.500-1.500 6-8.500 2-4-2.500z" fill="#fff" stroke="#666" stroke-width="1.200"/><path d="M1.500 8.500l4 2.500 8.500-2" fill="none" stroke="#666" stroke-width="1.500"/>
</svg>
<div class="lbl" style="left:849px;top:79px">图片效果</div><div class="arr" style="left:899px;top:86px"></div>
<svg style="left:830px;top:102px" width="17" height="17" viewBox="0 0 17 17">
<use href="#mtn" x="0.500" y="0.500" width="10" height="9"/>
<path d="M3 11v3.500h3.500" fill="none" stroke="#5fa07f" stroke-width="1.300"/><path d="M5.500 12l3 2.500-3 2.500z" fill="#5fa07f"/>
<rect x="9.500" y="11.500" width="7" height="5" fill="#fff" stroke="#666"/><path d="M11 14h4" stroke="#666"/>
</svg>
<div class="lbl" style="left:849px;top:102px">图片版式</div><div class="arr" style="left:899px;top:109px"></div>
<div class="grp" style="left:575px">图片样式</div>
<svg style="left:905px;top:132px" width="7" height="7" viewBox="0 0 7 7"><path d="M0.500 5V0.500H5" fill="none" stroke="#777"/><path d="M2.500 2.500l4 4M6.500 3.500v3h-3" fill="none" stroke="#777"/></svg>
<div class="sep" style="left:916px"></div>
<!-- arrange group -->
<svg style="left:930px;top:58px" width="24" height="28" viewBox="0 0 24 28">
<rect x="0.500" y="0.500" width="23" height="27" fill="#fff" stroke="#777"/>
<rect x="5" y="4" width="14" height="11" fill="#dbe6f4" stroke="#4a78b0"/>
<path d="M6.500 13.500l3.500-4.500 2.500 3 1.500-1.500 3.500 3z" fill="#4a78b0"/><circle cx="15" cy="7" r="1.200" fill="#e8c47a"/>
<path d="M3.500 18.500h17M3.500 21.500h17M3.500 24.500h17" stroke="#999"/>
</svg>
<div class="lbl" style="left:930px;top:91px">位置</div>
<div class="arr" style="left:939px;top:113px"></div>
<svg style="left:978px;top:58px" width="22" height="28" viewBox="0 0 22 28">
<path d="M0.500 0.500h14l7 7v20H0.500z" fill="#fff" stroke="#777"/><path d="M14.500 0.500v7h7" fill="none" stroke="#777"/>
<path d="M3.500 4.500h8M3.500 7.500h8M3.500 10.500h15M3.500 22.500h15M3.500 25h15M3.500 13.500h2M16.500 13.500h2M3.500 16.500h1.500M17 16.500h1.500M3.500 19.500h1.500M17 19.500h1.500" stroke="#5b86b8"/>
<path d="M6 21v-3a5 5 0 0 1 10 0v3h-2.500v-3a2.500 2.500 0 0 0-5 0v3z" fill="#666"/>
</svg>
<div class="lbl" style="left:965px;top:91px">自动换行</div>
<div class="arr" style="left:986px;top:113px"></div>
<!-- bring forward / send backward / selection pane -->
<svg style="left:1020px;top:57px" width="16" height="15" viewBox="0 0 16 15"><rect x="6.500" y="6.500" width="8" height="7" fill="#fff" stroke="#c8c8c8"/><rect x="0" y="0" width="10" height="9" fill="#cfcfcf"/></svg>
<div class="lbl dis" style="left:1038px;top:57px">上移一层</div><div class="arr" style="left:1096px;top:64px;border-top-color:#c4c4c4"></div>
<svg style="left:1020px;top:80px" width="16" height="15" viewBox="0 0 16 15"><rect x="0" y="0" width="8" height="7" fill="#cfcfcf"/><rect x="5.500" y="4.500" width="9" height="9" fill="#fff" stroke="#c0c0c0"/></svg>
<div class="lbl dis" style="left:1038px;top:80px">下移一层</div><div class="arr" style="left:1096px;top:87px;border-top-color:#c4c4c4"></div>
<svg style="left:1019px;top:102px" width="18" height="17" viewBox="0 0 18 17">
<rect x="0.500" y="0.500" width="5" height="5" fill="#fff" stroke="#666"/><rect x="0.500" y="10.500" width="6" height="5" fill="#fff" stroke="#666"/>
<rect x="7.500" y="1.500" width="6" height="6" fill="#f0c869" stroke="#c9a14a"/>
<path d="M9.500 5v10l2.300-2.200 1.700 3.700 1.600-0.700-1.700-3.600h3.100z" fill="#fff" stroke="#444" stroke-width="0.900"/>
</svg>
<div class="lbl" style="left:1038px;top:102px">选择窗格</div>
<!-- align / group / rotate -->
<svg style="left:1111px;top:56px" width="14" height="16" viewBox="0 0 14 16">
<path d="M1 0v16" stroke="#555" stroke-width="1.400"/><rect x="3" y="1.500" width="6" height="3.500" fill="#f0c869"/><rect x="3" y="6.500" width="10" height="3.500" fill="#e8b85a"/>
<path d="M13 13.500H4.500" stroke="#3b6ea8" stroke-width="1.300"/><path d="M3 13.500l3.200-2.600v5.200z" fill="#3b6ea8"/>
</svg>
<div class="lbl" style="left:1128px;top:57px">对齐</div><div class="arr" style="left:1154px;top:64px"></div>
<svg style="left:1109px;top:79px" width="17" height="16" viewBox="0 0 17 16">
<path d="M1.500 1.500h14v13h-14z" fill="none" stroke="#bdbdbd" stroke-dasharray="2 2"/>
<g fill="#c4c4c4"><rect x="0" y="0" width="3" height="3"/><rect x="14" y="0" width="3" height="3"/><rect x="0" y="13" width="3" height="3"/><rect x="14" y="13" width="3" height="3"/></g>
<rect x="4.500" y="4.500" width="6" height="5" fill="#fff" stroke="#bdbdbd"/><rect x="7.500" y="6.500" width="6" height="5" fill="#fff" stroke="#bdbdbd"/>
</svg>
<div class="lbl dis" style="left:1128px;top:80px">组合</div><div class="arr" style="left:1154px;top:87px;border-top-color:#c4c4c4"></div>
<svg style="left:1109px;top:103px" width="17" height="14" viewBox="0 0 17 14">
<path d="M8.500 1.500v11h7z" fill="#555"/><path d="M7 3.500v9h-6.500z" fill="none" stroke="#999" stroke-width="0.900"/><path d="M2 4c1-2.500 3-3.500 5-3.500" fill="none" stroke="#999" stroke-width="0.900"/><path d="M6 0l2.200 0.700-1.700 1.500z" fill="#888"/>
</svg>
<div class="lbl" style="left:1128px;top:102px">旋转</div><div class="arr" style="left:1154px;top:109px"></div>
<div class="grp" style="left:1032px">排列</div>
<div class="sep" style="left:1171px"></div>
<!-- size group -->
<svg style="left:1183px;top:59px" width="30" height="28" viewBox="0 0 30 28">
<path d="M0.500 16.500v9h26v-25h-10" fill="none" stroke="#666" stroke-dasharray="2 1.500"/>
<rect x="0.500" y="0.500" width="16" height="15" fill="#fff" stroke="#777"/>
<path d="M2 14l4-5 2.500 2.500 2-2 4.500 4.500z" fill="#4a78b0"/><circle cx="11.500" cy="5" r="1.400" fill="#e8c47a"/>
<path d="M22 16.500v9.500h8.500M17.500 20.500h9v8" fill="none" stroke="#5a5a5a" stroke-width="2"/>
</svg>
<div class="lbl" style="left:1185px;top:91px">裁剪</div>
<div class="arr" style="left:1194px;top:113px"></div>
<svg style="left:1221px;top:64px" width="16" height="16" viewBox="0 0 16 16">
<rect x="10.500" y="0.500" width="5" height="15" fill="#fff" stroke="#666"/>
<path d="M3.500 3.500v9" stroke="#3b6ea8" stroke-dasharray="1.500 1.500"/><path d="M0.500 4l3-3.500 3 3.500zM0.500 12l3 3.500 3-3.500z" fill="#3b6ea8"/><rect x="2" y="6.500" width="3" height="3" fill="#fff" stroke="#666" stroke-width="0.800"/>
</svg>
<div class="lbl" style="left:1240px;top:65px">高度:</div>
<div class="a" style="left:1272px;top:61px;width:86px;height:21px;border:1px solid #ababab;background:#fff"></div>
<div class="t" style="left:1275px;top:65px;font-family:'Liberation Mono','Noto Sans CJK SC',monospace;font-size:12px;color:#000;letter-spacing:-1px">3 厘米</div>
<div class="arr" style="left:1349px;top:66px;border-top:none;border-bottom:3px solid #666"></div>
<div class="arr" style="left:1349px;top:76px;border-top-color:#666"></div>
<svg style="left:1221px;top:95px" width="16" height="17" viewBox="0 0 16 17">
<rect x="0.500" y="0.500" width="15" height="5" fill="#fff" stroke="#666"/>
<path d="M3.500 12.500h9" stroke="#3b6ea8" stroke-dasharray="1.500 1.500"/><path d="M4 9.500l-3.500 3 3.500 3zM12 9.500l3.500 3-3.500 3z" fill="#3b6ea8"/><rect x="6.500" y="11" width="3" height="3" fill="#fff" stroke="#666" stroke-width="0.800"/>
</svg>
<div class="lbl" style="left:1240px;top:96px">宽度:</div>
<div class="a" style="left:1272px;top:92px;width:86px;height:21px;border:1px solid #ababab;background:#fff"></div>
<div class="t" style="left:1275px;top:96px;font-family:'Liberation Mono','Noto Sans CJK SC',monospace;font-size:12px;color:#000;letter-spacing:-1px">2.94 厘米</div>
<div class="arr" style="left:1349px;top:97px;border-top:none;border-bottom:3px solid #666"></div>
<div class="arr" style="left:1349px;top:107px;border-top-color:#666"></div>
<div class="grp" style="left:1248px">大小</div>
<svg style="left:1353px;top:132px" width="7" height="7" viewBox="0 0 7 7"><path d="M0.500 5V0.500H5" fill="none" stroke="#777"/><path d="M2.500 2.500l4 4M6.500 3.500v3h-3" fill="none" stroke="#777"/></svg>
<div class="sep" style="left:1364px"></div>
<svg style="left:1420px;top:131px" width="10" height="7" viewBox="0 0 10 7"><path d="M1 6l4-4.500 4 4.500" fill="none" stroke="#555" stroke-width="1.800"/></svg>

</div>
<!-- embed doc area (embed-local coordinates) -->
<div class="a" style="left:787px;top:113px;width:1px;height:140px;background:#dcdcdc"></div>
<div class="a" style="left:788px;top:113px;width:80px;height:140px;background:#fdfdfd"></div>
<!-- size highlight -->
<div class="a" style="left:748px;top:27.500px;width:101px;height:75px;border:2.600px solid #ee1be4"></div>
<div class="a" style="left:761px;top:87px;width:4px;height:2px;background:#e040c8"></div>
<!-- photo -->
<svg style="left:170.500px;top:139.500px;overflow:hidden" width="359" height="111" viewBox="0 0 359 111">
<defs><filter id="pb" x="-5%" y="-5%" width="110%" height="110%"><feGaussianBlur stdDeviation="1.300"/></filter>
<filter id="pb2" x="-5%" y="-5%" width="110%" height="110%"><feGaussianBlur stdDeviation="3"/></filter>
<linearGradient id="bgl" x1="0" y1="0" x2="0" y2="1"><stop offset="0" stop-color="#3a3331"/><stop offset="0.300" stop-color="#8f8480"/><stop offset="0.550" stop-color="#bdb2ac"/><stop offset="1" stop-color="#a89e98"/></linearGradient></defs>
<rect width="359" height="111" fill="#50564d"/>
<g filter="url(#pb2)">
<rect x="-5" y="-5" width="110" height="120" fill="url(#bgl)"/>
<rect x="30" y="-5" width="170" height="32" fill="#241f1e"/>
<ellipse cx="8" cy="6" rx="22" ry="14" fill="#f4f2f0"/>
<ellipse cx="20" cy="55" rx="24" ry="22" fill="#d6cfca"/>
<ellipse cx="70" cy="70" rx="18" ry="16" fill="#cfc6c0"/>
<ellipse cx="40" cy="80" rx="10" ry="16" fill="#8c8480"/>
<ellipse cx="78" cy="62" rx="6" ry="14" fill="#857c78"/>
<rect x="196" y="-5" width="170" height="120" fill="#444a41"/>
<ellipse cx="186" cy="10" rx="14" ry="14" fill="#14171b"/>
<ellipse cx="298" cy="24" rx="24" ry="24" fill="#272c27"/>
<ellipse cx="340" cy="12" rx="20" ry="14" fill="#262b26"/>
<ellipse cx="344" cy="74" rx="14" ry="28" fill="#2a3029"/>
<ellipse cx="238" cy="44" rx="12" ry="10" fill="#86736a"/>
<ellipse cx="224" cy="27" rx="8" ry="7" fill="#7d7068"/>
<ellipse cx="281" cy="79" rx="13" ry="10" fill="#6a5b52"/>
<ellipse cx="250" cy="66" rx="10" ry="8" fill="#5a6054"/>
<ellipse cx="238" cy="88" rx="10" ry="10" fill="#4f554a"/>
<ellipse cx="310" cy="86" rx="14" ry="6" fill="#2c312b"/>
<rect x="346" y="76" width="16" height="40" fill="#8d8076"/>
</g>
<g filter="url(#pb)">
<!-- snow -->
<g fill="none" stroke="#e9e8ec" stroke-linecap="round" stroke-linejoin="round">
<path d="M201 17Q222 5 240 6T268 15" stroke-width="12"/>
<path d="M237 32Q254 22 266 23L274 29" stroke-width="10"/>
<path d="M260 50Q267 45 272 46L275 51" stroke-width="10"/>
<path d="M270 71Q276 66 280 68" stroke-width="7"/>
<path d="M289 48L297 67" stroke-width="6"/>
<path d="M302 63Q311 58 318 61" stroke-width="10"/>
<path d="M322 73L332 71" stroke-width="9"/>
<path d="M329 35L338 40L350 31" stroke-width="11"/>
<path d="M336.500 23L337.500 34" stroke-width="4"/>
<path d="M252 106Q270 94 290 101T333 106" stroke-width="10"/>
<path d="M255 111h78" stroke-width="8"/>
<path d="M284 93l1 1M296 90l1 1M309 94l2 0" stroke-width="4"/>
</g>
<g fill="none" stroke="#4a4f46" stroke-linecap="round" stroke-width="2.500">
<path d="M214 16l10-5M236 10l12 1M246 30l10-5M264 50l6-2M306 63l8-2M334 38l8 2"/>
</g>
<path d="M270 106l12-3 4 5-14 3zM300 102l9-1 3 6-10 2z" fill="#3a4038"/>
<!-- hat -->
<path d="M175 112c-4-28-2-58 10-72c12-10 30-4 38 22c-10 4-18 12-22 24c-2 10-4 18-4 26z" fill="#ebe4dd"/>
<path d="M182 60c4 10 6 30 2 50M190 52c5 12 8 32 4 56M200 48c4 8 6 16 5 26" stroke="#cfc6bd" stroke-width="1.500" fill="none"/>
<!-- woman hair + face -->
<path d="M212 66c10-4 22 0 26 14c3 10 3 22 0 32h-34c-2-18 0-36 8-46z" fill="#4a3428"/>
<path d="M204 80c4-12 16-18 26-10c6 8 8 20 4 32c-2 4-4 8-8 10h-28c0-12 2-24 6-32z" fill="#e4b597"/>
<path d="M206 88l10-4M214 92c2-2 5-2 7 0" stroke="#3a2820" stroke-width="1.600" fill="none"/>
<path d="M222 104c4 1 8 0 10-3" stroke="#c0504a" stroke-width="2" fill="none"/>
<!-- scarf -->
<path d="M78 112c4-10 12-20 24-24l40 10 22-12c8 4 14 14 16 26z" fill="#eee8e2"/>
<!-- man face -->
<ellipse cx="160" cy="52" rx="20" ry="26" fill="#1b1513"/>
<path d="M98 40c-4 14-4 28-2 40c2 12 8 22 16 28l6 4h26c10-6 16-16 18-28c6-2 8-10 6-16c-2-4-6-4-8 0l-6-24-30-14z" fill="#e4b294"/>
<path d="M140 60c8 4 14 14 16 26c-2 10-8 20-16 26h-16c10-10 16-30 16-52z" fill="#d39a7c"/>
<path d="M158 70c4-4 8-2 8 4c0 6-4 10-8 10z" fill="#d0957a"/>
<path d="M99 62l11-2M122 60l13 3" stroke="#2a1a14" stroke-width="2.200" fill="none"/>
<path d="M101 66l8 0M124 66l9 1" stroke="#3a2218" stroke-width="1.400" fill="none"/>
<path d="M108 70c-2 6-4 10-2 13l6 1" stroke="#c08a6c" stroke-width="1.500" fill="none"/>
<path d="M104 92c5 2 11 2 16-1" stroke="#a85c50" stroke-width="2" fill="none"/>
<!-- man hair -->
<path d="M95 56c-3-20 6-40 26-50c20-8 44-4 56 10c8 10 9 26 5 40c-2 8-6 14-10 18c-1-6-3-10-7-12c-1-10-6-18-15-24c-12 4-22 4-30 6c-8 4-14 12-18 22z" fill="#1b1513"/>
<path d="M97 58c4-12 12-22 24-28" stroke="#1b1513" stroke-width="5" fill="none"/>
<path d="M120 10c10-4 24-4 34 0M110 20c12-6 30-8 46-2" stroke="#3a2e2a" stroke-width="1.500" fill="none"/>
<!-- cup -->
<path d="M44 96h32l-3 16H47z" fill="#5aa63a"/>
<ellipse cx="60" cy="110" rx="9" ry="6" fill="#e8d8c0"/><ellipse cx="60" cy="111" rx="6" ry="4" fill="#d8402a"/>
<path d="M37 92c0-8 10-11 21-11s20 3 20 11c0 5-9 7-20 7s-21-2-21-7z" fill="#f2b61c"/>
<ellipse cx="58" cy="86" rx="14" ry="3.500" fill="#f8cc48"/>
</g>
<!-- logo -->
<g transform="rotate(-10 38 36)">
<ellipse cx="38" cy="36" rx="28" ry="22" fill="#fff" filter="url(#pb2)"/>
<ellipse cx="38" cy="35" rx="23" ry="17.500" fill="#fffaf0" stroke="#f08c14" stroke-width="3.500"/>
<path d="M6 50c10-2 22-5 32-7c8-1.500 16-4 24-9c-8 10-20 15-32 16c-8 1-16 2-24 2z" fill="#e03414" stroke="#fff" stroke-width="0.800"/>
<text x="38" y="37.500" text-anchor="middle" font-family="Liberation Sans,Noto Sans CJK SC,sans-serif" font-weight="900" font-style="italic" font-size="13.500" fill="#e01414" stroke="#fff" stroke-width="0.500" paint-order="stroke">优乐美</text>
<rect x="30" y="44" width="14" height="4" rx="1.500" fill="#f08c14"/>
</g>
<path d="M11 7c3-2 6-1 7 1c3 0 4 3 2 5c-3 2-8 1-9-2z" fill="#c83028" filter="url(#pb)"/>
<path d="M9 5l9 -1" stroke="#222" stroke-width="1.200"/>
</svg>

<!-- selected picture -->
<div class="a" style="left:41px;top:232.500px;width:128px;height:20px;background:linear-gradient(118deg,transparent 0,transparent 36%,rgba(120,140,190,.45) 42%,rgba(120,140,190,.3) 50%,transparent 54%,transparent 66%,rgba(110,130,180,.4) 71%,rgba(110,130,180,.25) 78%,transparent 82%),linear-gradient(90deg,#9cc4e2 0,#74a8d4 14%,#8ab8dc 19%,#20306c 21%,#151f58 100%)"></div>
<div class="a" style="left:30px;top:217px;width:142px;height:40px;border:2.600px solid #f012e0"></div>
<div class="a" style="left:104.500px;top:218px;width:1px;height:14px;background:#9a9a9a"></div>
<div class="a" style="left:100.500px;top:212.500px;width:8px;height:8px;border-radius:50%;border:1px solid #b4b4b4;background:rgba(255,255,255,0.700)"></div>
<div class="a" style="left:38px;top:229.500px;width:5px;height:5px;background:#fff;border:1px solid #9a9a9a"></div>
<div class="a" style="left:102px;top:229.500px;width:5px;height:5px;background:#fff;border:1px solid #9a9a9a"></div>
<div class="a" style="left:166px;top:229.500px;width:5px;height:5px;background:#fff;border:1px solid #9a9a9a"></div>
<!-- layout options -->
<svg style="left:181px;top:233px" width="20" height="18" viewBox="0 0 20 18"><rect x="0.500" y="0.500" width="19" height="19" fill="#fff" stroke="#b8b8b8"/><path d="M3 4.500h14M3 7.500h14M3 10.500h3M14 10.500h3M3 13.500h2M15 13.500h2" stroke="#5b86b8" stroke-width="1"/><path d="M6 18v-3a4 4 0 0 1 8 0v3h-2v-3a2 2 0 0 0-4 0v3z" fill="#666"/></svg>
</div>

</div>

<!-- status bar -->
<div class="a" style="left:0;top:838px;width:1440px;height:22px;background:#2b579a"></div>
<div class="a" style="left:1186px;top:838px;width:37px;height:22px;background:#25508f"></div>
<div class="st" style="left:7px">页面: 1</div>
<div class="st" style="left:59px">节: 1</div>
<div class="st" style="left:98px">第 1 页，共 2 页</div>
<div class="st" style="left:201px">109 个字</div>
<div class="st" style="left:265px">英语(美国)</div>
<div class="st" style="left:341px">修订: 关闭</div>
<svg style="left:415px;top:842px" width="14" height="14" viewBox="0 0 14 14"><rect x="1.500" y="2.500" width="12" height="11" fill="none" stroke="#fff" stroke-width="1.200"/><path d="M3.500 7.500h8M3.500 10.500h8M5.500 6v6M8.500 6v6" stroke="#fff" stroke-width="1"/><rect x="2" y="3" width="11" height="3" fill="#fff"/><circle cx="3" cy="3" r="3" fill="#fff"/></svg>
<svg style="left:1159px;top:842px" width="14" height="13" viewBox="0 0 14 13"><path d="M0.500 1.500c2.500-1.500 4.500-1.500 6.500 0c2-1.500 4-1.500 6.500 0v10c-2.500-1.500-4.500-1.500-6.500 0c-2-1.500-4-1.500-6.500 0z" fill="none" stroke="#fff"/><path d="M7 1.500v11.500M2.500 4h3M2.500 6h3M2.500 8h3M8.500 4h3M8.500 6h3M8.500 8h3" stroke="#fff" stroke-width="0.900"/></svg>
<svg style="left:1197px;top:843px" width="14" height="13" viewBox="0 0 14 13"><rect x="0.500" y="0.500" width="13" height="12" fill="none" stroke="#fff"/><path d="M2.500 3.500h9M2.500 5.500h9M2.500 7.500h9M2.500 9.500h9" stroke="#fff"/></svg>
<svg style="left:1235px;top:842px" width="15" height="14" viewBox="0 0 15 14"><path d="M6 11.500H0.500V0.500h11V6" fill="none" stroke="#fff"/><path d="M2.500 3.500h7M2.500 5.500h5M2.500 7.500h4" stroke="#fff" stroke-width="0.900"/><circle cx="10.500" cy="9.500" r="3.800" fill="#fff"/><path d="M8 8.500c1.500 1 3.500 1 5 0M10.500 6v7" stroke="#2b579a" stroke-width="0.800" fill="none"/></svg>
<div class="a" style="left:1266px;top:848px;width:6px;height:2px;background:#fff"></div>
<div class="a" style="left:1276px;top:848px;width:100px;height:1px;background:#fff"></div>
<div class="a" style="left:1326px;top:845px;width:1px;height:8px;background:#fff"></div>
<div class="a" style="left:1331px;top:843px;width:4px;height:11px;background:#fff"></div>
<div class="a" style="left:1380px;top:848px;width:8px;height:2px;background:#fff"></div>
<div class="a" style="left:1383px;top:845px;width:2px;height:8px;background:#fff"></div>
<div class="st" style="left:1402px">156%</div>
<!-- taskbar -->
<div class="a" style="left:0;top:860px;width:1440px;height:40px;background:linear-gradient(100deg,#1b1a24 0,#22212c 18%,#2b2937 33%,#33313f 43%,#302e3c 45.500%,#22212c 47.500%,#201f2a 50%,#2c2a38 53%,#2b2937 58%,#1d1c26 66%,#16151d 80%,#131219 100%)"></div>
<div class="a" style="left:0;top:860px;width:1440px;height:1px;background:#7582a3;opacity:.8"></div>
<div class="a" style="left:0;top:861px;width:1440px;height:1px;background:#0c0c12;opacity:.6"></div>
<!-- start orb -->
<svg style="left:8px;top:861px" width="38" height="38" viewBox="0 0 38 38">
<defs><radialGradient id="orb" cx="50%" cy="75%" r="70%"><stop offset="0" stop-color="#38c8f0"/><stop offset="0.450" stop-color="#1c78b8"/><stop offset="1" stop-color="#143c70"/></radialGradient>
<linearGradient id="orbh" x1="0" y1="0" x2="0" y2="1"><stop offset="0" stop-color="#fff" stop-opacity="0.750"/><stop offset="1" stop-color="#fff" stop-opacity="0.100"/></linearGradient></defs>
<circle cx="19" cy="19" r="18.500" fill="#0a1a30" opacity="0.600"/>
<circle cx="19" cy="19" r="17.500" fill="url(#orb)" stroke="#7fb4d8" stroke-width="1"/>
<path d="M3 17a16 16 0 0 1 32 0c-8-5-24-5-32 0z" fill="url(#orbh)"/>
<path d="M11.500 10.500c2.500-1.500 4.500-1 6.500 0.300l-1.600 7c-2-1.200-4-1.500-6.500-0.200z" fill="#e8562a"/>
<path d="M19.500 11.200c2 1 4 1.200 6.500-0.200l-1.700 7c-2.300 1.300-4.400 1.200-6.400 0.200z" fill="#8cc63c"/>
<path d="M9.500 19c2.500-1.300 4.500-1 6.500 0.300l-1.700 7c-2-1.300-4-1.600-6.400-0.300z" fill="#3a9ce0"/>
<path d="M17.500 19.800c2 1 4.200 1.200 6.500-0.200l-1.700 7c-2.300 1.300-4.400 1.200-6.400 0.100z" fill="#f6c42c"/>
</svg>
<!-- grip -->
<div class="a" style="left:58px;top:865px;width:10px;height:30px;background-image:radial-gradient(circle,#5c5c68 0.800px,transparent 1px);background-size:4px 4px;opacity:.9"></div>
<!-- blue app -->
<svg style="left:90px;top:864px" width="30" height="30" viewBox="0 0 30 30">
<rect width="30" height="30" fill="#1e88f0"/>
<rect x="4" y="4" width="4" height="4" fill="#fff"/><rect x="4" y="13" width="4" height="4" fill="#fff"/><rect x="4" y="22" width="4" height="4" fill="#fff"/>
<rect x="12" y="4" width="15" height="9" fill="#fff"/><rect x="12" y="17" width="15" height="9" fill="#fff"/>
<path d="M14 0h16v16z" fill="#f8a818"/><path d="M18 1l10 10" stroke="#fce0a0" stroke-width="1.500" stroke-dasharray="2 1.500"/>
</svg>
<!-- task buttons -->
<div class="tb" style="left:138px"></div><div class="tb" style="left:200px"></div><div class="tb" style="left:262px"></div>
<svg style="left:152px;top:864px" width="30" height="30" viewBox="0 0 30 30"><circle cx="15" cy="15" r="14.500" fill="#fff"/><circle cx="15" cy="15" r="12.500" fill="#3a8ae0"/><path d="M21 8.500c-5-3-10.500-1-10 3c0.500 4 8 3.500 8.500 7.500c0.500 4-5 5.500-10.500 2.500" fill="none" stroke="#fff" stroke-width="4.600" stroke-linecap="round"/></svg>
<svg style="left:213px;top:867px" width="32" height="28" viewBox="0 0 32 28">
<path d="M1 4h9l2 2h9v3H1z" fill="#e8c458"/><rect x="3" y="2" width="3" height="2" fill="#3a9a48"/><rect x="12" y="3" width="3" height="2.500" fill="#d04030"/><rect x="19" y="5" width="3" height="2" fill="#3a9ad0"/>
<path d="M0 8h32v18H0z" fill="#f4dc88"/><path d="M0 8h32v3H0z" fill="#f8e8a8"/>
<path d="M5 15h22v13h-5v-7H10v7H5z" fill="#6cb8ec"/><path d="M5 15h22v3H5z" fill="#9cd4f4"/>
</svg>
<svg style="left:276px;top:864px" width="30" height="32" viewBox="0 0 30 32">
<rect x="16" y="5" width="13" height="22" fill="#fff"/><path d="M19 8.500h8M19 11.500h8M19 14.500h8M19 17.500h8M19 20.500h8M19 23.500h8" stroke="#2b579a" stroke-width="1.600"/>
<path d="M0 3l18-3v32L0 29z" fill="#2b579a"/>
<path d="M3.500 10.500l2.200 11 3-9.500 3 9.500 2.200-11" fill="none" stroke="#fff" stroke-width="2.200"/>
</svg>
<!-- tray -->
<div class="a" style="left:1074px;top:865px;width:6px;height:30px;background-image:radial-gradient(circle,#4c4c58 0.700px,transparent 1px);background-size:3px 4px;opacity:.9"></div>
<svg style="left:1092px;top:868px" width="16" height="17" viewBox="0 0 16 17"><path d="M4 6c0-3 3-2 5-3s3-2 5-2" fill="none" stroke="#999" stroke-width="1"/><rect x="0.500" y="6.500" width="15" height="9" rx="1.500" fill="#8a8a8a" stroke="#c8c8c8"/><path d="M2.500 9h11M2.500 11h11M4 13.500h8" stroke="#e8e8e8" stroke-width="1" stroke-dasharray="1.500 1"/></svg>
<svg style="left:1114px;top:869px" width="18" height="18" viewBox="0 0 18 18"><circle cx="9" cy="9" r="8.300" fill="#1c2cb0" stroke="#c8d0f0" stroke-width="1.200"/><text x="9" y="13.500" font-family="Liberation Sans,sans-serif" font-weight="bold" font-size="13" fill="#fff" text-anchor="middle">?</text></svg>
<svg style="left:1140px;top:868px" width="9" height="9" viewBox="0 0 9 9"><rect x="2.500" y="0.500" width="6" height="5" fill="none" stroke="#fff" stroke-width="1.200"/><rect x="0.500" y="3.500" width="6" height="5" fill="#1a1922" stroke="#fff" stroke-width="1.200"/></svg>
<div class="arr" style="left:1141px;top:882px;border-top-color:#fff;border-left-width:3.500px;border-right-width:3.500px;border-top-width:4px"></div>
<svg style="left:1158px;top:872px" width="17" height="16" viewBox="0 0 30 30" preserveAspectRatio="none"><rect width="30" height="30" fill="#1e88f0"/><rect x="4" y="4" width="4" height="4" fill="#fff"/><rect x="4" y="13" width="4" height="4" fill="#fff"/><rect x="4" y="22" width="4" height="4" fill="#fff"/><rect x="12" y="4" width="15" height="9" fill="#fff"/><rect x="12" y="17" width="15" height="9" fill="#fff"/><path d="M14 0h16v16z" fill="#f8a818"/></svg>
<svg style="left:1182px;top:872px" width="15" height="17" viewBox="0 0 15 17"><ellipse cx="7.500" cy="9" rx="5.500" ry="7" fill="#111"/><ellipse cx="7.500" cy="11.500" rx="3.800" ry="4.500" fill="#fff"/><circle cx="7.500" cy="4.500" r="3.800" fill="#111"/><circle cx="6" cy="4" r="0.900" fill="#fff"/><circle cx="9" cy="4" r="0.900" fill="#fff"/><ellipse cx="7.500" cy="6.300" rx="2" ry="0.900" fill="#f0a020"/><path d="M2.500 8.500c3 1.500 7 1.500 10 0v2c-3 1.300-7 1.300-10 0z" fill="#e02020"/><ellipse cx="4.500" cy="16" rx="2.500" ry="1" fill="#f0a020"/><ellipse cx="10.500" cy="16" rx="2.500" ry="1" fill="#f0a020"/></svg>
<svg style="left:1206px;top:872px" width="16" height="16" viewBox="0 0 16 16"><g fill="#f06880"><circle cx="8" cy="3.800" r="3.600"/><circle cx="12.200" cy="6.800" r="3.600"/><circle cx="10.600" cy="11.600" r="3.600"/><circle cx="5.400" cy="11.600" r="3.600"/><circle cx="3.800" cy="6.800" r="3.600"/></g><circle cx="8" cy="8" r="2.800" fill="#f8c8d0"/><circle cx="8" cy="8" r="1.200" fill="#88b8e0"/></svg>
<svg style="left:1230px;top:873px" width="11" height="15" viewBox="0 0 11 15"><path d="M0 5h3.500L10 0v15L3.500 10H0z" fill="#e86838"/><path d="M8 1.500L10 0v15l-2-1.500z" fill="#a83818"/></svg>
<svg style="left:1254px;top:873px" width="16" height="15" viewBox="0 0 16 15"><path d="M0 5h3L8 0.500v14L3 10H0z" fill="#e8e8e8" stroke="#fff" stroke-width="0.500"/><path d="M10 4.500c1.500 1.500 1.500 4.500 0 6M12 2.500c2.600 2.600 2.600 7.400 0 10" fill="none" stroke="#f4f4f4" stroke-width="1.200"/></svg>
<svg style="left:1278px;top:872px" width="16" height="16" viewBox="0 0 16 16"><circle cx="8" cy="8" r="7.500" fill="#a8b890" stroke="#e8ecd8" stroke-width="1"/><ellipse cx="8" cy="9" rx="5" ry="4.500" fill="#f4f4ee"/><circle cx="6" cy="8" r="0.900" fill="#444"/><circle cx="10" cy="8" r="0.900" fill="#444"/><path d="M6 10.500c1.200 1 2.800 1 4 0" stroke="#666" stroke-width="0.700" fill="none"/></svg>
<svg style="left:1302px;top:872px" width="16" height="17" viewBox="0 0 16 17"><path d="M3 0v4M1 1.500v3.500h4v-3.500M3 5v10h3" fill="none" stroke="#fff" stroke-width="1.200"/><rect x="5.500" y="4.500" width="10" height="8" fill="#222" stroke="#fff" stroke-width="1.200"/><path d="M8 15.500h5M10.500 12.500v3" stroke="#fff" stroke-width="1.200"/></svg>
<svg style="left:1326px;top:872px" width="17" height="17" viewBox="0 0 17 17"><path d="M1.500 0.500v16" stroke="#fff" stroke-width="1.400"/><path d="M2.500 1.500c3-1.500 5 1.500 8 0v6.500c-3 1.500-5-1.500-8 0z" fill="#fff"/><circle cx="11.500" cy="11.500" r="4.800" fill="#e02828"/><path d="M9.500 9.500l4 4M13.500 9.500l-4 4" stroke="#fff" stroke-width="1.500"/></svg>
<div class="t" style="left:1350px;top:865px;width:75px;text-align:center;font-size:12px;color:#fff">18:37</div>
<div class="t" style="left:1350px;top:882px;width:75px;text-align:center;font-size:12px;letter-spacing:0.600px;color:#fff">2020/11/15</div>
<div class="a" style="left:1426px;top:861px;width:14px;height:39px;background:linear-gradient(90deg,#3a3a42,#5a5a62 40%,#2a2a32);border-left:1px solid #0a0a0e;opacity:.85"></div>
</body></html>
